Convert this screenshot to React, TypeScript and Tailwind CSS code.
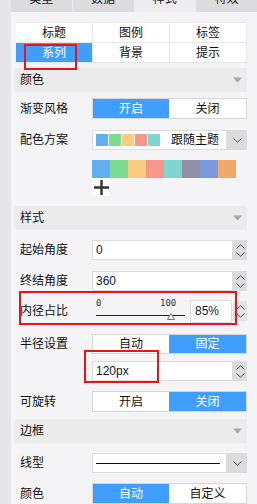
import React from 'react';

const font = { fontFamily: '"Liberation Sans", "Noto Sans CJK SC", sans-serif' };

const palette = ['#62aeee', '#7bdc92', '#f9cc80', '#f7968a', '#7fd6d0', '#8f8faa', '#7b9ae0', '#f0a96a'];

const Caret = () => (
  <svg width="9" height="6" viewBox="0 0 9 6" className="mr-[5px]">
    <path d="M0 0.5 L9 0.5 L4.5 5.5 Z" fill="#a8a8a8" />
  </svg>
);

const Chevron = ({ up }: { up?: boolean }) => (
  <svg width="9" height="5" viewBox="0 0 9 5">
    <path d={up ? 'M0.5 4.5 L4.5 0.8 L8.5 4.5' : 'M0.5 0.5 L4.5 4.2 L8.5 0.5'} fill="none" stroke="#555" strokeWidth="1" />
  </svg>
);

const Spinner = ({ bg = 'bg-[#dcdcdc]' }: { bg?: string }) => (
  <div className={`w-[14px] h-full flex flex-col items-center justify-center gap-[3px] ${bg}`}>
    <Chevron up />
    <Chevron />
  </div>
);

const Section = ({ title }: { title: string }) => (
  <div className="h-[24px] bg-[#ebebeb] flex items-center justify-between pl-[5px]">
    <span className="text-[12px] text-[#111]">{title}</span>
    <Caret />
  </div>
);

const Label = ({ children }: { children: React.ReactNode }) => (
  <div className="w-[77px] pl-[5px] text-[12px] text-[#111] shrink-0">{children}</div>
);

const Toggle = ({ left, right, active, h = 'h-[21px]' }: { left: string; right: string; active: 0 | 1; h?: string }) => (
  <div className={`w-[155px] ${h} flex border border-[#d6d6d6] bg-white text-[12px]`}>
    <div className={`w-[76px] flex items-center justify-center ${active === 0 ? 'bg-[#409eff] text-white' : 'text-[#111]'}`}>{left}</div>
    <div className={`flex-1 flex items-center justify-center ${active === 1 ? 'bg-[#409eff] text-white' : 'text-[#111]'}`}>{right}</div>
  </div>
);

const NumberInput = ({ value }: { value: string }) => (
  <div className="w-[155px] h-[20px] flex">
    <div className="flex-1 bg-white border border-[#dcdcdc] flex items-center pl-[3px] text-[12px] text-[#14143c]">{value}</div>
    <Spinner />
  </div>
);

const Row = ({ label, children, className = '' }: { label: string; children: React.ReactNode; className?: string }) => (
  <div className={`flex items-center ${className}`}>
    <Label>{label}</Label>
    {children}
  </div>
);

export default function App() {
  const tabs = ['类型', '数据', '样式', '特效'];
  const sub = ['标题', '图例', '标签', '系列', '背景', '提示'];

  return (
    <div className="w-[257px] h-[504px] flex overflow-hidden" style={font}>
      <div className="w-[11px] bg-[#e6e6e8] shrink-0" />
      <div className="flex-1 bg-[#f4f4f6] overflow-hidden">
        {/* top tabs, scrolled partly out of view */}
        <div className="h-[12px] overflow-hidden flex gap-px bg-[#ededf0]">
          {tabs.map((t, i) => (
            <div key={t} className={`flex-1 ${i === 2 ? 'bg-[#ededf0]' : 'bg-[#dcdcdf]'}`}>
              <div className="h-[24px] -mt-[13px] flex items-center justify-center text-[12px] text-[#222]">{t}</div>
            </div>
          ))}
        </div>

        <div className="pl-[4px] pr-[10px]">
          {/* sub tabs */}
          <div className="relative mt-[10px] ml-px grid grid-cols-3 bg-white border-t border-[#ececec]">
            {sub.map((s) => (
              <div
                key={s}
                className={`h-[20px] flex items-center justify-center text-[12px] border-r border-b border-[#e6e6e6] ${s === '系列' ? 'bg-[#409eff] text-white' : 'text-[#111]'}`}
              >
                {s}
              </div>
            ))}
            <div className="absolute left-[8px] top-[21px] w-[53px] h-[26px] border-2 border-[#e8141a]" />
          </div>

          <div className="mt-[5px]">
            <Section title="颜色" />
          </div>

          <Row label="渐变风格" className="mt-[6px]">
            <Toggle left="开启" right="关闭" active={0} />
          </Row>

          <Row label="配色方案" className="mt-[11px]">
            <div className="w-[155px] h-[20px] flex">
              <div className="flex-1 bg-white border border-[#dcdcdc] flex items-center pl-[3px] gap-px">
                {palette.slice(0, 5).map((c) => (
                  <div key={c} className="w-[12px] h-[12px]" style={{ background: c }} />
                ))}
                <span className="ml-[10px] text-[12px] text-[#111]">跟随主题</span>
              </div>
              <div className="w-[20px] bg-[#dcdcdc] flex items-center justify-center">
                <Chevron />
              </div>
            </div>
          </Row>

          <div className="mt-[10px] pl-[77px]">
            <div className="flex">
              {palette.map((c) => (
                <div key={c} className="w-[18px] h-[18px]" style={{ background: c }} />
              ))}
            </div>
            <div className="w-[18px] h-[18px] bg-white flex items-center justify-center">
              <svg width="15" height="15" viewBox="0 0 15 15">
                <path d="M7.5 0 V15 M0 7.5 H15" stroke="#333" strokeWidth="2.4" />
              </svg>
            </div>
          </div>

          <div className="mt-[10px]">
            <Section title="样式" />
          </div>

          <Row label="起始角度" className="mt-[10px]">
            <NumberInput value="0" />
          </Row>

          <Row label="终结角度" className="mt-[11px]">
            <NumberInput value="360" />
          </Row>

          <div className="relative mt-[8px] flex items-center h-[24px]">
            <Label>内径占比</Label>
            <div className="w-[98px] h-full relative">
              <div className="absolute left-[4px] top-[0px] text-[9px] leading-none text-[#333]" style={{ fontFamily: '"DejaVu Sans Mono", monospace' }}>0</div>
              <div className="absolute left-[68px] top-[0px] text-[9px] leading-none text-[#333]" style={{ fontFamily: '"DejaVu Sans Mono", monospace' }}>100</div>
              <div className="absolute left-[4px] top-[16px] w-[89px] h-px bg-[#222]" />
              <svg className="absolute left-[75px] top-[14px]" width="8" height="7" viewBox="0 0 8 7">
                <path d="M4 0.5 L7.5 6.5 L0.5 6.5 Z" fill="#fff" stroke="#777" strokeWidth="1" />
              </svg>
            </div>
            <div className="w-[42px] h-[23px] bg-white border border-[#dcdcdc] flex items-center pl-[4px] text-[12px] text-[#14143c]">85%</div>
            <div className="w-[13px] h-[20px] ml-px">
              <Spinner bg="bg-[#e4e4e6]" />
            </div>
            <div className="absolute left-[4px] top-[-8px] w-[218px] h-[34px] border-2 border-[#e8141a] pointer-events-none" />
          </div>

          <div className="flex items-start mt-[11px]">
            <div className="w-[77px] pl-[5px] pt-[1px] text-[12px] text-[#111] shrink-0">半径设置</div>
            <div className="relative">
              <Toggle left="自动" right="固定" active={1} h="h-[20px]" />
              <div className="mt-[7px]">
                <NumberInput value="120px" />
              </div>
              <div className="absolute left-[-8px] top-[16px] w-[75px] h-[33px] border-2 border-[#e8141a] pointer-events-none" />
            </div>
          </div>

          <Row label="可旋转" className="mt-[10px]">
            <Toggle left="开启" right="关闭" active={1} />
          </Row>

          <div className="mt-[7px]">
            <Section title="边框" />
          </div>

          <Row label="线型" className="mt-[10px]">
            <div className="w-[155px] h-[20px] flex">
              <div className="flex-1 bg-white border border-[#dcdcdc] flex items-center px-[3px]">
                <div className="w-[124px] h-px bg-[#111]" />
              </div>
              <div className="w-[20px] bg-[#dcdcdc] flex items-center justify-center">
                <Chevron />
              </div>
            </div>
          </Row>

          <Row label="颜色" className="mt-[10px]">
            <Toggle left="自动" right="自定义" active={0} />
          </Row>
        </div>
      </div>
    </div>
  );
}
